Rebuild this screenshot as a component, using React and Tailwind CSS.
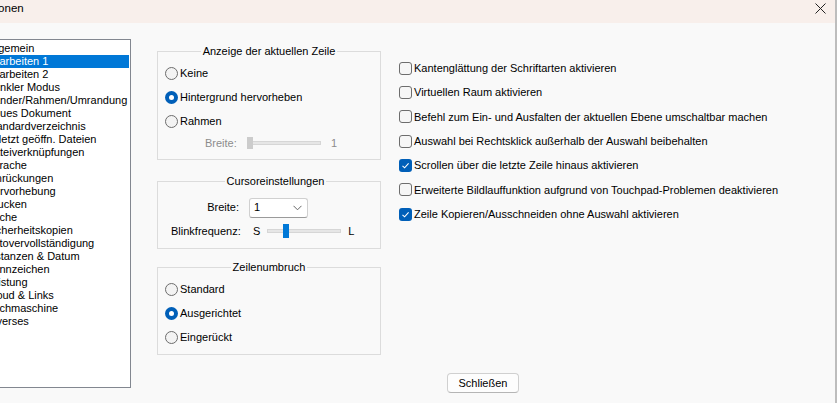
import React from 'react';

const categories = [
  'Allgemein', 'Bearbeiten 1', 'Bearbeiten 2', 'Dunkler Modus', 'Ränder/Rahmen/Umrandung',
  'Neues Dokument', 'Standardverzeichnis', 'Zuletzt geöffn. Dateien', 'Dateiverknüpfungen',
  'Sprache', 'Einrückungen', 'Hervorhebung', 'Drucken', 'Suche', 'Sicherheitskopien',
  'Autovervollständigung', 'Instanzen & Datum', 'Kennzeichen', 'Leistung', 'Cloud & Links',
  'Suchmaschine', 'Diverses',
];

const options = [
  { label: 'Kantenglättung der Schriftarten aktivieren', checked: false },
  { label: 'Virtuellen Raum aktivieren', checked: false },
  { label: 'Befehl zum Ein- und Ausfalten der aktuellen Ebene umschaltbar machen', checked: false },
  { label: 'Auswahl bei Rechtsklick außerhalb der Auswahl beibehalten', checked: false },
  { label: 'Scrollen über die letzte Zeile hinaus aktivieren', checked: true },
  { label: 'Erweiterte Bildlauffunktion aufgrund von Touchpad-Problemen deaktivieren', checked: false },
  { label: 'Zeile Kopieren/Ausschneiden ohne Auswahl aktivieren', checked: true },
];

function Radio({ label, checked }) {
  return (
    <div className="flex items-center h-[24px]">
      {checked ? (
        <span className="w-[13px] h-[13px] rounded-full bg-[#005fb8] flex items-center justify-center">
          <span className="w-[5px] h-[5px] rounded-full bg-white" />
        </span>
      ) : (
        <span className="w-[13px] h-[13px] rounded-full border border-[#6d6d6d] bg-[#f3f3f3]" />
      )}
      <span className="ml-[2px]">{label}</span>
    </div>
  );
}

function Checkbox({ label, checked }) {
  return (
    <div className="flex items-center h-[24.33px]">
      {checked ? (
        <span className="w-[13px] h-[13px] rounded-[3px] bg-[#005fb8] flex items-center justify-center">
          <svg width="9" height="9" viewBox="0 0 9 9" fill="none">
            <path d="M1.5 4.8 L3.6 6.8 L7.6 2.4" stroke="white" strokeWidth="1.1" />
          </svg>
        </span>
      ) : (
        <span className="w-[13px] h-[13px] rounded-[3px] border border-[#6d6d6d] bg-[#f6f6f6]" />
      )}
      <span className="ml-[2px]">{label}</span>
    </div>
  );
}

function Group({ title, className, children }) {
  return (
    <fieldset className={`border border-[#dcdcdc] ${className}`}>
      <legend className="mx-auto px-[2px] leading-[16px]">{title}</legend>
      {children}
    </fieldset>
  );
}

export default function App() {
  return (
    <div className="w-[838px] h-[403px] overflow-hidden bg-white font-['Liberation_Sans',Arial,sans-serif] text-[11px] text-black">
      <div className="-ml-[28px] w-[865px] h-[403px] flex flex-col border-r-2 border-[#bdbdbd] bg-[#f9f9f9]">
        {/* title bar */}
        <div className="h-[23px] shrink-0 flex items-center justify-between bg-[#f8efeb] pl-[5px] pr-[9px]">
          <span className="leading-none -mt-[6px] text-[11.5px]">Optionen</span>
          <svg width="11" height="11" viewBox="0 0 11 11" className="-mt-[6px]">
            <path d="M0.5 0.5 L10.5 10.5 M10.5 0.5 L0.5 10.5" stroke="#222" strokeWidth="1" />
          </svg>
        </div>

        <div className="flex items-start pt-[16px]">
          {/* category list */}
          <div className="ml-[10px] w-[149px] h-[349px] border border-[#828790] bg-white pt-[2px] pl-[1px] pr-[1px]">
            {categories.map((c, i) => (
              <div
                key={c}
                className={`h-[13px] leading-[13px] pl-[2px] whitespace-nowrap ${i === 1 ? 'bg-[#0078d7] text-white' : ''}`}
              >
                {c}
              </div>
            ))}
          </div>

          <div className="ml-[26px] mt-[4px] flex flex-col">
            <div className="flex items-start">
              {/* middle column */}
              <div className="w-[224px] flex flex-col">
                <Group title="Anzeige der aktuellen Zeile" className="h-[117px] px-[7px]">
                  <div className="pt-[2px]">
                    <Radio label="Keine" />
                    <Radio label="Hintergrund hervorheben" checked />
                    <Radio label="Rahmen" />
                    <div className="flex items-center h-[20px] text-[#8c8c8c]">
                      <span className="ml-[40px] w-[42px]">Breite:</span>
                      <div className="relative w-[74px] h-[4px] bg-[#e6e6e6] border border-[#d6d6d6]">
                        <span className="absolute -left-[1px] -top-[5px] w-[6px] h-[12px] bg-[#cccccc]" />
                      </div>
                      <span className="ml-[10px]">1</span>
                    </div>
                  </div>
                </Group>

                <Group title="Cursoreinstellungen" className="mt-[13px] h-[76px] pl-[13px]">
                  <div className="flex items-center h-[21px] mt-[8px]">
                    <span className="w-[68px] text-right">Breite:</span>
                    <div className="ml-[10px] w-[59px] h-[20px] rounded-[3px] border border-[#d0d0d0] border-b-[#9a9a9a] bg-white flex items-center justify-between pl-[4px] pr-[5px]">
                      <span>1</span>
                      <svg width="9" height="6" viewBox="0 0 9 6" fill="none">
                        <path d="M0.5 0.8 L4.5 4.8 L8.5 0.8" stroke="#666" strokeWidth="1" />
                      </svg>
                    </div>
                  </div>
                  <div className="flex items-center h-[16px] mt-[5px]">
                    <span className="w-[68px] text-right">Blinkfrequenz:</span>
                    <span className="ml-[14px]">S</span>
                    <div className="relative ml-[7px] w-[74px] h-[4px] bg-[#e6e6e6] border border-[#d6d6d6]">
                      <span className="absolute left-[15px] -top-[6px] w-[6px] h-[14px] bg-[#0078d7]" />
                    </div>
                    <span className="ml-[7px]">L</span>
                  </div>
                </Group>

                <Group title="Zeilenumbruch" className="mt-[10px] h-[96px] px-[7px]">
                  <div className="pt-[2px]">
                    <Radio label="Standard" />
                    <Radio label="Ausgerichtet" checked />
                    <Radio label="Eingerückt" />
                  </div>
                </Group>
              </div>

              {/* right column */}
              <div className="ml-[18px] mt-[13px] flex flex-col">
                {options.map((o) => (
                  <Checkbox key={o.label} label={o.label} checked={o.checked} />
                ))}
              </div>
            </div>

            <button className="ml-[290px] mt-[18px] w-[72px] h-[20px] rounded-[4px] border border-[#d0d0d0] border-b-[#b5b5b5] bg-[#fdfdfd] leading-none">
              Schließen
            </button>
          </div>
        </div>
      </div>
    </div>
  );
}
